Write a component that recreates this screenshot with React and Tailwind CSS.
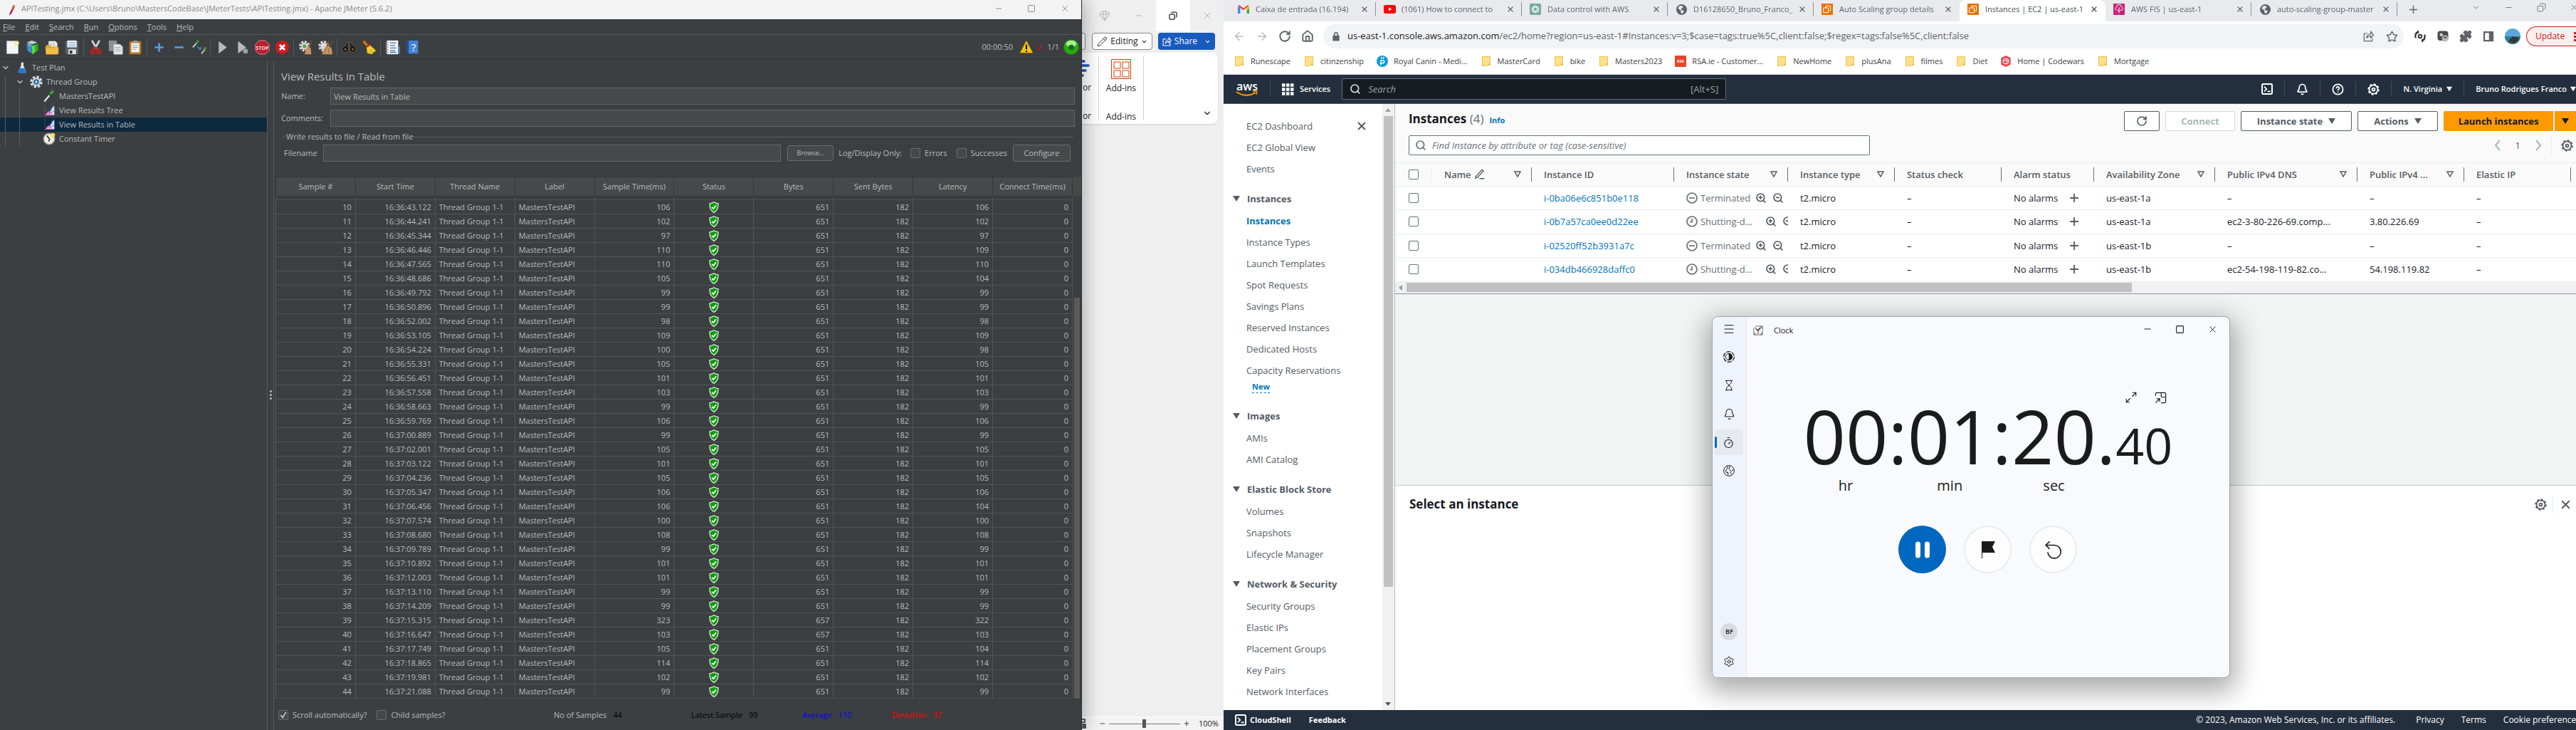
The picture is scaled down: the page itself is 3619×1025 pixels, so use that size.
import React from "react";
import {
  ArrowLeft, ArrowRight, RotateCw, Home, Star, Bell, X, Minus, Plus, Search, ZoomIn, ZoomOut,
  Square, Copy, ChevronDown, Gem, Puzzle, Menu, Hourglass, Timer, Maximize2, Settings,
  CircleHelp, Pencil,
} from "lucide-react";

const cx = (...a) => a.filter(Boolean).join(" ");

function Svg({ w = 22, h = 22, box = "0 0 24 24", className, children }) {
  return (
    <svg width={w} height={h} viewBox={box} fill="none" className={cx("shrink-0", className)} aria-hidden="true">
      {children}
    </svg>
  );
}

/* ---------------------------------------------------------------- JMeter */

const SAMPLES = [
  [10, "16:36:43.122", 106, 651, 106], [11, "16:36:44.241", 102, 651, 102], [12, "16:36:45.344", 97, 651, 97],
  [13, "16:36:46.446", 110, 651, 109], [14, "16:36:47.565", 110, 651, 110], [15, "16:36:48.686", 105, 651, 104],
  [16, "16:36:49.792", 99, 651, 99], [17, "16:36:50.896", 99, 651, 99], [18, "16:36:52.002", 98, 651, 98],
  [19, "16:36:53.105", 109, 651, 109], [20, "16:36:54.224", 100, 651, 98], [21, "16:36:55.331", 105, 651, 105],
  [22, "16:36:56.451", 101, 651, 101], [23, "16:36:57.558", 103, 651, 103], [24, "16:36:58.663", 99, 651, 99],
  [25, "16:36:59.769", 106, 651, 106], [26, "16:37:00.889", 99, 651, 99], [27, "16:37:02.001", 105, 651, 105],
  [28, "16:37:03.122", 101, 651, 101], [29, "16:37:04.236", 105, 651, 105], [30, "16:37:05.347", 106, 651, 106],
  [31, "16:37:06.456", 106, 651, 104], [32, "16:37:07.574", 100, 651, 100], [33, "16:37:08.680", 108, 651, 108],
  [34, "16:37:09.789", 99, 651, 99], [35, "16:37:10.892", 101, 651, 101], [36, "16:37:12.003", 101, 651, 101],
  [37, "16:37:13.110", 99, 651, 99], [38, "16:37:14.209", 99, 651, 99], [39, "16:37:15.315", 323, 657, 322],
  [40, "16:37:16.647", 103, 657, 103], [41, "16:37:17.749", 105, 651, 104], [42, "16:37:18.865", 114, 651, 114],
  [43, "16:37:19.981", 102, 651, 102], [44, "16:37:21.088", 99, 651, 99],
];

const TOOLBAR = [
  [
    ["New", <><path d="M3 2h14l4 4v16H3z" fill="#f4f4f4" stroke="#c9c9c9" /><circle cx="19" cy="5" r="3.5" fill="#f7e27a" /><circle cx="19" cy="5" r="1.6" fill="#fffbe0" /></>],
    ["Templates", <><path d="M3 4l8-3 9 3-8 3z" fill="#bcd3dc" /><path d="M3 5l8 4v13l-7-5z" fill="#3f8fd0" /><path d="M11 10l10-4v11l-9 6z" fill="#22b41f" /><path d="M11 10l5-2v12l-4 3z" fill="#60d94a" /><path d="M5 3l5 3 1 5-6-3z" fill="#8aa9b5" /></>],
    ["Open", <><path d="M6 2h11l3 3v9H6z" fill="#e9e9e9" /><path d="M8 6h8M8 9h9" stroke="#aaa" /><path d="M1 10l3-2h4l2 3h12v10l-2 2H2z" fill="#e2a52b" /><path d="M1 13h21l-1 10H2z" fill="#f2bd48" /></>],
    ["Save", <><path d="M1 2h21v20l-1 1H3l-2-2z" fill="#5d6165" /><path d="M4 1h15v11H4z" fill="#eef2f6" /><path d="M6 4h11M6 7h11M6 10h11" stroke="#6da0cf" /><path d="M6 15h12v8H6z" fill="#dfe0e1" /><path d="M8 17h4v5H8z" fill="#333" /></>],
  ],
  [
    ["Cut", <><path d="M6 1l8 14M18 1L10 15" stroke="#d9dde0" strokeWidth="3" /><circle cx="7" cy="19" r="3" stroke="#c61d1d" strokeWidth="2.6" /><circle cx="17" cy="19" r="3" stroke="#c61d1d" strokeWidth="2.6" /><path d="M9 16l3-4 3 4" stroke="#c61d1d" strokeWidth="2.4" /></>],
    ["Copy", <><path d="M1 1h13v17H1z" fill="#8d8f90" /><path d="M9 7h10l4 4v12H9z" fill="#e8e8e8" stroke="#bdbdbd" /><path d="M11 12h9M11 15h9M11 18h9" stroke="#999" /></>],
    ["Paste", <><rect x="2" y="2" width="19" height="21" rx="2" fill="#b5771d" /><path d="M5 5h13v15H5z" fill="#f3f3f3" /><rect x="8" y="1" width="7" height="4" rx="1" fill="#999" /><path d="M7 9h9M7 12h9M7 15h6" stroke="#8d8d8d" /></>],
  ],
  [
    ["Expand", <path d="M12 5v14M5 12h14" stroke="#5a9be0" strokeWidth="3" />],
    ["Collapse", <path d="M5 12h14" stroke="#5a9be0" strokeWidth="3" />],
    ["Toggle", <><path d="M2 12L10 3" stroke="#e4e4e4" strokeWidth="2" /><path d="M7 6l4-5" stroke="#3f9c33" strokeWidth="3" /><path d="M8 10l7 5m0-4v4h-4" stroke="#4e7fc4" strokeWidth="1.6" /><path d="M16 22l6-7" stroke="#d4d4d4" strokeWidth="2" /><path d="M20 16l3-4" stroke="#4f9647" strokeWidth="3" /></>],
  ],
  [
    ["Start", <path d="M6 2l13 10L6 22z" fill="#b7b9ba" />],
    ["Start no pauses", <><path d="M5 2l13 10L5 22z" fill="#b7b9ba" /><circle cx="17" cy="18" r="4" fill="#9fa1a2" /></>],
    ["Stop", <><path d="M7 1h10l6 6v10l-6 6H7l-6-6V7z" fill="#b8222f" stroke="#d98a90" /><text x="12" y="15.5" textAnchor="middle" fontSize="8" fontWeight="700" fill="#f6dada" fontFamily="Open Sans">STOP</text></>],
    ["Shutdown", <><circle cx="12" cy="12" r="11" fill="#cf1a1f" /><path d="M8 8l8 8M16 8l-8 8" stroke="#fff" strokeWidth="3.4" /></>],
  ],
  [
    ["Clear", <><circle cx="10" cy="10" r="7" stroke="#dcdcdc" strokeWidth="3.4" strokeDasharray="3.4 2" /><circle cx="10" cy="10" r="5.5" fill="#d8d8d8" /><circle cx="10" cy="10" r="3" fill="#53a83c" /><path d="M22 1l-5 11" stroke="#7d4a22" strokeWidth="2" /><path d="M14 11l6 2 1 10H10z" fill="#c89462" /></>],
    ["Clear All", <><circle cx="9" cy="10" r="7" stroke="#dcdcdc" strokeWidth="3.4" strokeDasharray="3.4 2" /><circle cx="9" cy="10" r="5.5" fill="#d8d8d8" /><path d="M17 1l-3 11M23 1l-4 11" stroke="#7d4a22" strokeWidth="2" /><path d="M11 11l10 1 2 11H6z" fill="#c89462" /><path d="M13 13l-3 9M17 13v9" stroke="#8d5f36" /></>],
  ],
  [
    ["Search", <><circle cx="6" cy="15" r="5" fill="#15130f" stroke="#75665a" /><circle cx="18" cy="15" r="5" fill="#15130f" stroke="#75665a" /><path d="M5 10l3-6h3v8M19 10l-3-6h-3v8" fill="#2b2622" stroke="#6b5a4d" /><circle cx="6" cy="15" r="2" fill="#8a5a33" /><circle cx="18" cy="15" r="2" fill="#8a5a33" /></>],
    ["Reset Search", <><path d="M3 2l8 9" stroke="#c07a16" strokeWidth="4" /><path d="M8 12l5-4 10 9-7 6-7-2z" fill="#f2cf2b" /><path d="M8 11l6-4" stroke="#c2261f" strokeWidth="3" /><path d="M12 20l4-5M15 22l4-5" stroke="#b78d11" /></>],
  ],
  [
    ["Function Helper", <><path d="M3 1h18v22H3z" fill="#fbfbfb" /><path d="M1 4h5M1 8h5M1 12h5M1 16h5M1 20h5" stroke="#aaa" strokeWidth="1.6" /><path d="M8 5h10M8 9h8M8 13h10M8 17h8M8 20h10" stroke="#3b6ab5" strokeWidth="1.6" /><path d="M22 10h2v12h-2z" fill="#3b8ad9" /></>],
    ["Help", <><path d="M3 1h18v21H5l-2-2z" fill="#4385d6" /><path d="M3 1h3v21l-3-2z" fill="#1f4f93" /><text x="14" y="18" textAnchor="middle" fontSize="17" fill="#fff" fontFamily="Open Sans">?</text></>],
  ],
];

function Check({ label, checked }) {
  return (
    <label className="flex items-center gap-[6px]">
      <span className="grid place-items-center">
        <input type="checkbox" defaultChecked={checked} className="col-start-1 row-start-1 size-[14px] appearance-none rounded-[2px] border border-[#6b6b6b] bg-[#43494a]" />
        {checked && (
          <Svg w={10} h={10} className="pointer-events-none col-start-1 row-start-1">
            <path d="M3 12l7 9L21 2" stroke="#c8c8c8" strokeWidth="4" />
          </Svg>
        )}
      </span>
      <span>{label}</span>
    </label>
  );
}

const Shield = () => (
  <Svg w={14} h={16} box="0 0 14 16" className="mx-auto">
    <path d="M7 .8c2 1.3 3.8 1.9 6 2.1C13.200 9 11.500 13 7 15.300 2.500 13 .8 9 1 2.900 3.200 2.700 5 2.100 7 .8z" fill="#0a9b0a" stroke="#e3e6e3" strokeWidth="1.3" />
    <path d="M4.2 7.800l2.100 2.300L10 5.300" stroke="#fff" strokeWidth="1.8" />
  </Svg>
);

const ChartIcon = () => (
  <Svg w={16} h={16}>
    <path d="M3 1v22" stroke="#8b8b8b" strokeDasharray="2 2" />
    <path d="M4 22l6-8 5 4 7-5v9z" fill="#e795d8" /><path d="M12 17l8-13 3-1v19z" fill="#d5e4fa" /><path d="M12 17l8-13 3-1" stroke="#5c80cf" strokeWidth="2" />
    <path d="M4 22l6-8 5 4 7-5" stroke="#c23fae" strokeWidth="1.5" />
  </Svg>
);

const TREE = [
  { d: 0, t: "Test Plan", icon: <Svg w={16} h={18}><path d="M10 1h5v7l6 13q0 2-2 2H6q-2 0-2-2l6-13z" fill="#dfe9f2" /><path d="M8 13h9l4 8q0 2-2 2H6q-2 0-2-2z" fill="#1f77d8" /></Svg> },
  { d: 1, t: "Thread Group", icon: <Svg w={18} h={18}><circle cx="12" cy="12" r="9.5" stroke="#d9dcde" strokeWidth="4" strokeDasharray="4.5 3" /><circle cx="12" cy="12" r="8" fill="#cfd5d9" /><circle cx="12" cy="12" r="5" fill="#2d66ad" /><path d="M10.5 9l4 3-4 3z" fill="#fff" /></Svg> },
  { d: 2, t: "MastersTestAPI", icon: <Svg w={18} h={18}><path d="M3 22L14 9" stroke="#dde2dd" strokeWidth="3" /><path d="M12 10l8-8" stroke="#3f9c33" strokeWidth="5" /><path d="M11 7l6 6" stroke="#2a2a2a" strokeWidth="2" /></Svg> },
  { d: 2, t: "View Results Tree", icon: <ChartIcon /> },
  { d: 2, t: "View Results in Table", icon: <ChartIcon />, on: true },
  { d: 2, t: "Constant Timer", icon: <Svg w={18} h={18}><circle cx="12" cy="12" r="10.5" fill="#f2eede" stroke="#8d8d9a" strokeWidth="2" /><path d="M8 6l5 7-2 4" stroke="#222" strokeWidth="2" /><circle cx="19" cy="5" r="4" fill="#f4df56" /></Svg> },
];

const field = "h-6 min-w-0 border border-[#646464] bg-[#45494a] px-1 text-[11px] text-[#bbbbbb] outline-none";
const jbtn = "flex items-center justify-center rounded-[3px] border border-[#6a6d6f] bg-[#45494a]";

function JMeter() {
  return (
    <section className="relative z-10 flex w-[42%] shrink-0 flex-col border-r border-[#2b2b2b] bg-[#3c3f41] text-[11px] leading-4 text-[#bbbbbb] shadow-[4px_0_24px_rgba(0,0,0,0.28)]">
      <header className="flex h-[27px] items-center bg-[#f3f3f3] pl-2 text-[#8a8a8a]">
        <Svg w={16} h={18}><path d="M16 1q4 1 2 7l-6 12-3 1z" fill="#c7242c" /><path d="M17 1q3 0 2 4l-4 6z" fill="#ef7d21" /><path d="M12 13l-4 10" stroke="#6e2177" strokeWidth="2" /></Svg>
        <h1 className="flex-1 pl-[6px] pb-[3px]">APITesting.jmx (C:\Users\Bruno\MastersCodeBase\JMeterTests\APITesting.jmx) - Apache JMeter (5.6.2)</h1>
        <div className="flex gap-[34px] pr-4 pb-1">
          <button aria-label="Minimize"><Minus size={12} strokeWidth={2} /></button>
          <button aria-label="Maximize"><Square size={12} strokeWidth={2} /></button>
          <button aria-label="Close"><X size={14} strokeWidth={1.5} /></button>
        </div>
      </header>
      <nav className="flex h-[22px] items-center gap-[14px] border-b border-[#515658] pl-1">
        {["File", "Edit", "Search", "Run", "Options", "Tools", "Help"].map((m) => (
          <button key={m}><u>{m[0]}</u>{m.slice(1)}</button>
        ))}
      </nav>
      <div className="flex h-[35px] items-center border-b border-[#323232] pl-[3px]">
        {TOOLBAR.map((g, i) => (
          <React.Fragment key={i}>
            {i > 0 && <span className="mx-[2px] h-6 w-px bg-[#55585a]" />}
            {g.map(([name, art]) => (
              <button key={name} aria-label={name} className="flex w-7 justify-center"><Svg w={21} h={21}>{art}</Svg></button>
            ))}
          </React.Fragment>
        ))}
        <div className="ml-auto flex items-center pr-[3px]">
          <span>00:00:50</span>
          <Svg w={22} h={20} className="ml-2"><path d="M12 1l11 21H1z" fill="#f2c511" stroke="#8d6f00" /><path d="M12 8v8M12 18v2.5" stroke="#111" strokeWidth="2.5" /></Svg>
          <span className="ml-1 text-[#ff0000]">2</span>
          <span className="ml-2">1/1</span>
          <Svg w={22} h={22} className="ml-[6px]"><circle cx="12" cy="12" r="11.5" fill="#26a80e" /><ellipse cx="12" cy="7" rx="8" ry="5" fill="#a9ec9a" /><circle cx="12" cy="12.5" r="4" fill="#166d12" /></Svg>
        </div>
      </div>

      <div className="flex flex-1">
        <aside className="w-[376px] shrink-0 border-r border-[#55585a] pt-px">
          <ul>
            {TREE.map((n) => (
              <li key={n.t} className={cx("flex h-5 items-center", n.on && "bg-[#0d293e]")}>
                {n.d > 0 && <span className="ml-[7px] h-5 w-px bg-[#5a5d5f]" />}
                {n.d > 1 && <span className="ml-[19px] h-5 w-px bg-[#5a5d5f]" />}
                {n.d === 2 && <span className="w-[32px]" />}
                {n.d < 2 && <ChevronDown size={12} strokeWidth={3} className={n.d ? "mr-2 ml-[14px]" : "mr-2 ml-[2px]"} />}
                <span className="flex w-[18px] justify-center">{n.icon}</span>
                <span className="pl-[5px]">{n.t}</span>
              </li>
            ))}
          </ul>
        </aside>
        <div className="flex w-[9px] shrink-0 flex-col items-center border-r border-[#55585a] pt-[464px]">
          {[0, 1, 2].map((i) => <span key={i} className="mb-[2px] size-[3px] rounded-full bg-[#bdbdbd]" />)}
        </div>
        <main className="flex min-w-0 flex-1 flex-col">
          <h2 className="pl-[10px] pt-3 text-[15px] leading-[22px]">View Results in Table</h2>
          <div className="flex items-center pl-[10px] pr-[9px] pt-[5px]">
            <label htmlFor="jm-name" className="w-[69px]">Name:</label>
            <input id="jm-name" defaultValue="View Results in Table" className={cx(field, "flex-1")} />
          </div>
          <div className="flex items-center pl-[10px] pr-[9px] pt-[7px]">
            <label htmlFor="jm-com" className="w-[69px]">Comments:</label>
            <input id="jm-com" className={cx(field, "flex-1")} />
          </div>
          <div className="flex items-center pl-3 pr-[11px] pt-[6px]">
            <span className="h-px w-1 bg-[#5a5d5f]" />
            <span className="px-px">Write results to file / Read from file</span>
            <span className="h-px flex-1 bg-[#5a5d5f]" />
          </div>
          <div className="flex items-center pl-[14px] pr-[15px] pt-[3px]">
            <label htmlFor="jm-file" className="w-[55px]">Filename</label>
            <input id="jm-file" className={cx(field, "flex-1")} />
            <button className={cx(jbtn, "ml-[9px] h-[22px] w-[65px] text-[9px]")}>Browse...</button>
            <span className="ml-[7px] mr-3">Log/Display Only:</span>
            <Check label="Errors" />
            <span className="w-[13px]" />
            <Check label="Successes" />
            <button className={cx(jbtn, "ml-2 h-6 w-[81px]")}>Configure</button>
          </div>
          <div className="mt-[21px] flex border-b border-[#343637] pl-[2px]">
            <table className="w-full flex-1 table-fixed border-collapse">
              <thead>
                <tr className="h-[27px] bg-[#45494a]">
                  {["Sample #", "Start Time", "Thread Name", "Label", "Sample Time(ms)", "Status", "Bytes", "Sent Bytes", "Latency", "Connect Time(ms)"].map((h) => (
                    <th key={h} className="border border-[#35383a] p-0 font-normal whitespace-nowrap">{h}</th>
                  ))}
                </tr>
              </thead>
              <tbody>
                <tr className="h-[5px]" aria-hidden="true">
                  {Array.from({ length: 10 }, (_, i) => <td key={i} className="border border-[#505456] border-t-[#35383a] p-0" />)}
                </tr>
                {SAMPLES.map(([n, t, ms, b, lat]) => (
                  <tr key={n} className="h-5 leading-[19px] text-right [&>td]:border [&>td]:border-[#505456] [&>td]:px-[5px] [&>td]:py-0">
                    <td>{n}</td><td>{t}</td><td className="text-left">Thread Group 1-1</td><td className="text-left">MastersTestAPI</td>
                    <td>{ms}</td><td><Shield /></td><td>{b}</td><td>182</td><td>{lat}</td><td>0</td>
                  </tr>
                ))}
              </tbody>
            </table>
            <div className="flex w-3 flex-col">
              <span className="h-[27px] bg-[#45494a]" />
              <span className="mr-[2px] ml-[2px] mt-[143px] flex-1 bg-[#595b5d]" />
            </div>
          </div>
          <div className="flex h-[43px] items-center pl-[6px]">
            <div className="flex w-[387px] gap-[14px]">
              <Check label="Scroll automatically?" checked />
              <Check label="Child samples?" />
            </div>
            <div className="flex w-[193px] gap-[9px]"><span>No of Samples</span><span className="text-black">44</span></div>
            <div className="flex w-[156px] gap-[9px] text-black"><span>Latest Sample</span><span>99</span></div>
            <div className="flex w-[126px] gap-[9px] text-[#0000ff]"><span>Average</span><span>110</span></div>
            <div className="flex gap-[9px] text-[#ff0000]"><span>Deviation</span><span>37</span></div>
          </div>
        </main>
      </div>
    </section>
  );
}

/* ------------------------------------------------------------------ Word */

function Word() {
  return (
    <section className="flex w-[199px] shrink-0 flex-col bg-[#efefef] text-[#222]">
      <div className="flex h-11 items-center text-[#b5b5b5]">
        <Gem size={16} strokeWidth={1.5} className="ml-[24px]" />
        <button aria-label="Minimize" className="ml-[34px]"><Minus size={12} strokeWidth={2} /></button>
        <button aria-label="Restore" className="ml-[18px] grid h-11 w-12 place-items-center bg-white text-[#222]"><Copy size={12} strokeWidth={2.5} className="-scale-x-100" /></button>
        <button aria-label="Close" className="ml-[16px]"><X size={16} strokeWidth={1.5} /></button>
      </div>
      <div className="flex h-7 items-center text-[12px]">
        <span className="h-6 w-[5px] rounded-r border border-l-0 border-[#8a8a8a] bg-white" />
        <button className="ml-[9px] flex h-6 w-[85px] items-center justify-center gap-1 rounded border border-[#8a8a8a] bg-white">
          <Pencil size={15} strokeWidth={1.5} />Editing<ChevronDown size={9} strokeWidth={3} />
        </button>
        <button className="ml-2 flex h-6 w-[80px] items-center justify-center gap-1 rounded bg-[#185abd] text-white">
          <Svg w={13} h={13}><path d="M10 5H2v17h18v-8M8 17c0-7 5-10 9-10V2l6 7-6 6v-4c-4 0-7 2-9 6z" stroke="#fff" strokeWidth="2" /></Svg>
          Share<ChevronDown size={9} strokeWidth={3} className="ml-[6px]" />
        </button>
      </div>
      <div className="mr-2 mt-[2px] flex h-[100px] rounded-r-lg bg-white pt-[5px] text-[12px] leading-5 shadow">
        <div className="flex h-[90px] w-6 flex-col border-r border-[#d0d0d0]">
          <Svg w={12} h={28} box="0 0 12 28" className="mt-1"><path d="M0 3h3M0 9h9M0 16h5M0 23h1" stroke="#185abd" strokeWidth="3.5" strokeLinecap="round" /></Svg>
          <span className="mt-[2px] pl-[1px]">or</span>
          <span className="mt-5 pl-[1px]">or</span>
        </div>
        <div className="flex h-[90px] w-[63px] flex-col items-center border-r border-[#d0d0d0]">
          <Svg w={28} h={28} box="0 0 28 28" className="mt-1"><path d="M.5.5h27v27H.5zM4 4h9v9H4zM16 4h9v9h-9zM4 16h9v9H4zM16 16h9v9h-9z" stroke="#d83b01" /></Svg>
          <span className="mt-[3px]">Add-ins</span>
          <span className="mt-5">Add-ins</span>
        </div>
        <button aria-label="Collapse ribbon" className="ml-auto mr-2 mb-2 self-end"><ChevronDown size={14} strokeWidth={2} /></button>
      </div>
      <footer className="mt-auto flex h-[19px] items-center border-t border-white bg-[#f3f3f3] text-[11px] leading-4">
        <Svg w={6} h={14} box="0 0 6 14"><path d="M0 1h4v4H0M0 8h5v5H0M0 10.500h5M2.500 8v5" stroke="#333" strokeWidth="1.5" /></Svg>
        <button aria-label="Zoom out" className="ml-[18px]"><Minus size={10} /></button>
        <input type="range" aria-label="Zoom" defaultValue="50" className="ml-1 h-3 w-[100px] appearance-none bg-[linear-gradient(#777,#777)] bg-[length:100%_1px] bg-center bg-no-repeat [&::-webkit-slider-thumb]:h-3 [&::-webkit-slider-thumb]:w-[5px] [&::-webkit-slider-thumb]:appearance-none [&::-webkit-slider-thumb]:bg-[#555]" />
        <button aria-label="Zoom in" className="ml-1"><Plus size={10} /></button>
        <span className="ml-3">100%</span>
      </footer>
    </section>
  );
}

/* ---------------------------------------------------------------- Chrome */

const Gmail = () => <Svg w={16} h={14} box="0 0 24 18"><path d="M0 18V2l5 4v12z" fill="#4285f4" /><path d="M19 18V6l5-4v16z" fill="#34a853" /><path d="M5 6L1 2l2-2 9 7 9-7 2 2-11 9z" fill="#ea4335" /><path d="M19 6l4-5 1 2v5l-5 3z" fill="#fbbc04" /></Svg>;
const YouTube = () => <Svg w={17} h={12} box="0 0 24 17"><rect width="24" height="17" rx="4" fill="#f00" /><path d="M10 5l6 3.5-6 3.5z" fill="#fff" /></Svg>;
const Gpt = () => <Svg w={16} h={16}><rect width="24" height="24" rx="3" fill="#74aa9c" /><g stroke="#fff" strokeWidth="1.3"><ellipse cx="12" cy="12" rx="4" ry="8" /><ellipse cx="12" cy="12" rx="4" ry="8" transform="rotate(60 12 12)" /><ellipse cx="12" cy="12" rx="4" ry="8" transform="rotate(120 12 12)" /></g></Svg>;
const GlobeDark = () => <Svg w={15} h={15}><circle cx="12" cy="12" r="12" fill="#5f6368" /><path d="M9 3l5 1 1 4-4 2 0 3 5 1 1 3-4 4-3-3 0-4-6-5 2-4z" fill="#e8eaed" /></Svg>;
const Ec2 = () => <Svg w={16} h={16}><rect width="24" height="24" fill="#ed7100" /><path d="M4 9h10v10H4zM9 9V5h10v10h-5" stroke="#fff" strokeWidth="1.5" /></Svg>;
const Fis = () => <Svg w={16} h={16}><rect width="24" height="24" fill="#c7267a" /><path d="M6 14a4 4 0 011-7 5 5 0 0110 0 4 4 0 011 7h-4M12 8v12M12 16l-4-2" stroke="#fff" strokeWidth="1.5" /></Svg>;

const TABS = [
  [<Gmail />, "Caixa de entrada (16.194)"], [<YouTube />, "(1061) How to connect to"], [<Gpt />, "Data control with AWS"],
  [<GlobeDark />, "D16128650_Bruno_Franco_"], [<Ec2 />, "Auto Scaling group details"], [<Ec2 />, "Instances | EC2 | us-east-1", true],
  [<Fis />, "AWS FIS | us-east-1"], [<GlobeDark />, "auto-scaling-group-master"],
];

const Folder = () => <Svg w={16} h={14} box="0 0 16 14"><path d="M2.5.5h11v12H8.500v1h-6z" fill="#ffe08a" stroke="#e8c357" /><path d="M11 10h3v3h-3z" fill="#e8c357" /></Svg>;
const Royal = () => <Svg w={16} h={16}><circle cx="12" cy="12" r="12" fill="#0b9ad9" /><path d="M9 20V10h4a3 3 0 010 6H7M10 3l1 4M15 3l-1 4" stroke="#fff" strokeWidth="2.2" /></Svg>;
const Rsa = () => <Svg w={16} h={16}><rect width="24" height="24" rx="2" fill="#e5452b" /><text x="12" y="15" textAnchor="middle" fontSize="8" fontWeight="700" fill="#fff" fontFamily="Open Sans">RSA</text></Svg>;
const Codewars = () => <Svg w={16} h={16}><path d="M12 0l10 5v14l-10 5L2 19V5z" fill="#e8474f" /><circle cx="12" cy="12" r="6" stroke="#fff" strokeWidth="1.5" /><path d="M12 6q4 4 0 12M6 12q6-4 12 0" stroke="#fff" strokeWidth="1.5" /></Svg>;

const MARKS = [
  [<Folder />, "Runescape"], [<Folder />, "citinzenship"], [<Royal />, "Royal Canin - Medi..."], [<Folder />, "MasterCard"], [<Folder />, "bike"],
  [<Folder />, "Masters2023"], [<Rsa />, "RSA.ie - Customer..."], [<Folder />, "NewHome"], [<Folder />, "plusAna"], [<Folder />, "filmes"],
  [<Folder />, "Diet"], [<Codewars />, "Home | Codewars"], [<Folder />, "Mortgage"],
];

function BrowserBars() {
  return (
    <>
      <div className="flex h-[30px] bg-[#e8eaed] pl-[9px] text-[11px] text-[#5f6368]">
        {TABS.map(([icon, t, on], i) => (
          <div key={t} className={cx("flex h-[30px] w-[205px] shrink-0 items-center pb-1 pl-[11px]", on && "rounded-t-lg bg-white text-[#45494d]")}>
            <span className="flex w-[17px] shrink-0 justify-center">{icon}</span>
            <span className="ml-2 w-[144px] overflow-hidden whitespace-nowrap [mask-image:linear-gradient(90deg,#000_94%,transparent)]">{t}</span>
            <button aria-label={"Close " + t} className="ml-[3px]"><X size={12} strokeWidth={2.5} /></button>
            {!on && i !== 4 && <span className="ml-auto h-5 w-px bg-[#8d9196]" />}
          </div>
        ))}
        <button aria-label="New tab" className="ml-[14px] pb-1"><Plus size={17} strokeWidth={2} /></button>
        <div className="ml-auto flex items-center gap-[33px] overflow-hidden pb-[10px]">
          <ChevronDown size={13} strokeWidth={1.5} />
          <Minus size={13} strokeWidth={1.5} />
          <Copy size={13} strokeWidth={1.5} className="-scale-x-100" />
          <X size={13} strokeWidth={1.5} className="-mr-1" />
        </div>
      </div>
      <div className="flex h-[42px] items-center bg-white text-[13px] text-[#5f6368]">
        <div className="flex gap-[14px] pl-[13px]">
          <button aria-label="Back" className="text-[#b8babd]"><ArrowLeft size={18} /></button>
          <button aria-label="Forward" className="text-[#b8babd]"><ArrowRight size={18} /></button>
          <button aria-label="Reload"><RotateCw size={18} strokeWidth={2.5} /></button>
          <button aria-label="Home"><Home size={18} strokeWidth={2.5} /></button>
        </div>
        <div className="ml-[13px] flex h-[34px] flex-1 items-center rounded-full bg-[#f1f3f4] pl-[11px] pr-2">
          <Svg w={14} h={14}><path d="M4 10h16v13H4z" fill="#5f6368" /><path d="M8 11V7a4 4 0 018 0v4" stroke="#5f6368" strokeWidth="2.5" /></Svg>
          <span className="flex-1 pl-[9px]"><span className="text-[#202124]">us-east-1.console.aws.amazon.com</span>/ec2/home?region=us-east-1#Instances:v=3;$case=tags:true%5C,client:false;$regex=tags:false%5C,client:false</span>
          <button aria-label="Share" className="mr-4"><Svg w={16} h={16}><path d="M9 6H2v16h17v-6M7 16c1-6 4-9 9-9V2l6 7-6 6v-4c-4 0-6 1-9 5z" stroke="#5f6368" strokeWidth="1.8" /></Svg></button>
          <button aria-label="Bookmark"><Star size={17} /></button>
        </div>
        <div className="flex items-center gap-[14px] overflow-hidden pl-[14px]">
          <Svg w={18} h={18}><path d="M4 15a9 9 0 012-10l3-2M20 9a9 9 0 01-2 10l-3 2" stroke="#333" strokeWidth="3" /><path d="M8 1v5h-5M16 23v-5h5" stroke="#333" strokeWidth="2" /><circle cx="12" cy="12" r="3" stroke="#333" strokeWidth="2.5" /></Svg>
          <Svg w={18} h={18}><rect x="2" y="2" width="20" height="18" rx="5" fill="#4b4b4b" /><circle cx="9" cy="9" r="3" fill="#cfcfcf" /><circle cx="16" cy="16" r="6" fill="#b9b9b9" /><path d="M13 14h6" stroke="#444" strokeWidth="2" /></Svg>
          <Puzzle size={18} fill="currentColor" />
          <Svg w={18} h={18}><path d="M4 4h16v16H4z" stroke="#5f6368" strokeWidth="3" /><path d="M13 4h7v16h-7z" fill="#5f6368" /></Svg>
          <Svg w={22} h={22}><circle cx="12" cy="12" r="12" fill="#5ba7e0" /><path d="M0 12h24a12 12 0 01-24 0z" fill="#2f7f93" /><path d="M12 12l10 2a12 12 0 01-9 9l-8-3z" fill="#3a3734" /></Svg>
          <button className="-ml-[6px] flex h-7 w-[70px] shrink-0 items-center rounded-l-full border border-r-0 border-[#c5221f] bg-[#fceeee] pl-3 text-[12px] text-[#c5221f]">
            Update<span className="ml-auto flex flex-col gap-[2px]">{[0, 1, 2].map((i) => <span key={i} className="size-[3px] bg-[#c5221f]" />)}</span>
          </button>
        </div>
      </div>
      <div className="flex h-[33px] items-center gap-[18px] border-b border-[#dadce0] bg-white pb-1 pl-[14px] text-[11px] text-[#3c4043]">
        {MARKS.map(([icon, t]) => <a key={t} href="#" className="flex items-center gap-2 whitespace-nowrap">{icon}{t}</a>)}
      </div>
    </>
  );
}

/* ------------------------------------------------------------ AWS console */

const Cog = ({ size = 18 }) => (
  <Svg w={size} h={size}>
    <circle cx="12" cy="12" r="8.5" stroke="currentColor" strokeWidth="2.5" />
    <circle cx="12" cy="12" r="10.4" stroke="currentColor" strokeWidth="2.4" strokeDasharray="4.1 4.07" />
    <circle cx="12" cy="12" r="2.8" stroke="currentColor" strokeWidth="2.5" />
  </Svg>
);
const Shell = () => <Svg w={16} h={16}><rect x="1.5" y="1.5" width="21" height="21" rx="2.5" stroke="currentColor" strokeWidth="3" /><path d="M6 7l5 5-5 5M13 17h6" stroke="currentColor" strokeWidth="2.5" /></Svg>;
const Down = ({ s = 10 }) => <Svg w={s} h={s} box="0 0 10 10"><path d="M0 1h10L5 9z" fill="currentColor" /></Svg>;
const Rule = () => <span className="h-[22px] w-px bg-[#414d5c]" />;

const NAV = [
  ["", ["EC2 Dashboard", "EC2 Global View", "Events"]],
  ["Instances", ["Instances", "Instance Types", "Launch Templates", "Spot Requests", "Savings Plans", "Reserved Instances", "Dedicated Hosts", "Capacity Reservations"]],
  ["Images", ["AMIs", "AMI Catalog"]],
  ["Elastic Block Store", ["Volumes", "Snapshots", "Lifecycle Manager"]],
  ["Network & Security", ["Security Groups", "Elastic IPs", "Placement Groups", "Key Pairs", "Network Interfaces"]],
];

const COLS = [
  ["Name", "w-[140px]", true], ["Instance ID", "w-[200px]"], ["Instance state", "w-[160px]", true], ["Instance type", "w-[150px]", true],
  ["Status check", "w-[150px]"], ["Alarm status", "w-[130px]"], ["Availability Zone", "w-[170px]", true], ["Public IPv4 DNS", "w-[200px]", true],
  ["Public IPv4 ...", "w-[150px]", true], ["Elastic IP", "w-[150px]"],
];

const INSTANCES = [
  ["i-0ba06e6c851b0e118", false, "us-east-1a", "–", "–"],
  ["i-0b7a57ca0ee0d22ee", true, "us-east-1a", "ec2-3-80-226-69.comp...", "3.80.226.69"],
  ["i-02520ff52b3931a7c", false, "us-east-1b", "–", "–"],
  ["i-034db466928daffc0", true, "us-east-1b", "ec2-54-198-119-82.co...", "54.198.119.82"],
];

function StateCell({ busy }) {
  return (
    <div className="flex items-center overflow-hidden whitespace-nowrap text-[#687078]">
      <Svg w={16} h={16}><circle cx="12" cy="12" r="10.5" stroke="currentColor" strokeWidth="2.5" /><path d={busy ? "M12 6v7H8" : "M6 12h12"} stroke="currentColor" strokeWidth="2.5" /></Svg>
      <span className={cx("ml-1 shrink-0", busy ? "w-[84px]" : "w-[70px]")}>{busy ? "Shutting-d..." : "Terminated"}</span>
      <ZoomIn size={16} strokeWidth={2.5} className="ml-[7px] shrink-0 text-[#545b64]" />
      <ZoomOut size={16} strokeWidth={2.5} className="ml-2 shrink-0 text-[#545b64]" />
    </div>
  );
}

const tick = "block size-[14px] appearance-none rounded-[2px] border border-[#687078] bg-white";
const abtn = "flex h-7 items-center justify-center gap-2 rounded-[2px] border bg-white";

function Console() {
  return (
    <div className="flex flex-1 flex-col text-[13px] leading-[18px] text-[#16191f]">
      <header className="flex h-10 items-center bg-[#232f3e] text-[11px] font-semibold text-white">
        <a href="#" aria-label="AWS" className="ml-[17px] flex w-8 flex-col items-center">
          <span className="text-[16px] leading-[12px] font-semibold">aws</span>
          <Svg w={32} h={9} box="0 0 32 9"><path d="M1 2q14 9 27 1" stroke="#ff9900" strokeWidth="2" /><path d="M24 1.500l6-.5-1 5" stroke="#ff9900" strokeWidth="1.5" /></Svg>
        </a>
        <span className="ml-4 h-[22px] w-px bg-[#414d5c]" />
        <button className="ml-4 flex items-center gap-2">
          <Svg w={17} h={17} box="0 0 17 17"><path d="M0 2.500h4.500M6 2.500h4.500M12 2.500h4.500M0 8.500h4.500M6 8.500h4.500M12 8.500h4.500M0 14.500h4.500M6 14.500h4.500M12 14.500h4.500" stroke="#fff" strokeWidth="4.5" /></Svg>
          Services
        </button>
        <label className="ml-4 flex h-[30px] w-[540px] items-center rounded-[2px] border border-[#687078] bg-[#161b22] px-[10px] text-[13px] font-normal text-[#95a5a6]">
          <Search size={16} strokeWidth={2.5} className="text-[#d5dbdb]" />
          <input aria-label="Search" placeholder="Search" className="ml-[10px] flex-1 bg-transparent italic outline-none placeholder:text-[#95a5a6]" />
          [Alt+S]
        </label>
        <div className="ml-auto flex items-center gap-4 whitespace-nowrap">
          <button aria-label="CloudShell"><Shell /></button><Rule />
          <button aria-label="Notifications"><Bell size={17} strokeWidth={2.5} /></button><Rule />
          <button aria-label="Help"><CircleHelp size={17} strokeWidth={2.5} /></button><Rule />
          <button aria-label="Settings"><Cog size={17} /></button><Rule />
          <button className="flex items-center gap-[6px]">N. Virginia <Down s={8} /></button><Rule />
          <button className="flex items-center gap-[5px]">Bruno Rodrigues Franco <Down s={8} /></button>
        </div>
      </header>

      <div className="flex flex-1 border-t border-[#545b64]">
        <aside className="w-[223px] shrink-0 bg-white pt-4">
          {NAV.map(([head, items], i) => (
            <div key={i} className={i ? "mt-[11px]" : ""}>
              {head && <button className="flex h-8 items-center gap-[10px] pl-[13px] font-bold text-[#545b64]"><Down />{head}</button>}
              {items.map((t) => (
                <div key={t} className="flex h-[30px] items-center justify-between pl-8 pr-5">
                  <a href="#" className={t === "Instances" ? "font-bold text-[#0073bb]" : "text-[#545b64]"}>{t}</a>
                  {t === "EC2 Dashboard" && <button aria-label="Close navigation" className="text-[#545b64]"><X size={18} strokeWidth={2.5} /></button>}
                </div>
              ))}
              {head === "Instances" && (
                <div className="h-[22px] pl-10 text-[11px] leading-4 font-bold text-[#0073bb]"><span className="inline-block border-b border-dashed border-[#0073bb]">New</span></div>
              )}
            </div>
          ))}
        </aside>
        <div className="flex w-[17px] shrink-0 flex-col items-center justify-between bg-[#f1f1f1]">
          <span className="flex h-[17px] items-center"><Svg w={8} h={5} box="0 0 8 5"><path d="M0 5l4-5 4 5z" fill="#9a9a9a" /></Svg></span>
          <span className="w-[13px] flex-1 bg-[#c1c1c1]" />
          <span className="flex h-[173px] items-end pb-[6px]"><Svg w={8} h={5} box="0 0 8 5"><path d="M0 0l4 5 4-5z" fill="#505050" /></Svg></span>
        </div>
        <main className="flex min-w-0 flex-1 flex-col border-l border-[#b5bdbd] bg-[#f2f3f3]">
          <div className="bg-[#fafafa] pt-[10px]">
            <div className="flex items-center justify-between pl-[19px]">
              <h2 className="pb-1 text-[17px] font-bold">Instances <span className="font-normal text-[#687078]">(4)</span><a href="#" className="ml-2 text-[11px] font-bold text-[#0073bb]">Info</a></h2>
              <div className="flex gap-2 font-bold text-[#545b64]">
                <button aria-label="Refresh" className={cx(abtn, "w-[50px] border-[#545b64]")}><RotateCw size={16} strokeWidth={2.5} /></button>
                <button disabled className={cx(abtn, "w-[98px] border-[#d5dbdb] text-[#aab7b8]")}>Connect</button>
                <button className={cx(abtn, "w-[156px] border-[#545b64]")}>Instance state <Down /></button>
                <button className={cx(abtn, "w-[113px] border-[#545b64]")}>Actions <Down /></button>
                <div className="flex gap-[2px] text-[#16191f]">
                  <button className="h-7 w-[154px] rounded-l-[2px] bg-[#ff9900]">Launch instances</button>
                  <button aria-label="More launch options" className="grid h-7 w-[30px] place-items-center bg-[#ff9900]"><Down /></button>
                </div>
              </div>
            </div>
            <div className="flex items-center justify-between pt-[6px] pl-[19px] pr-1">
              <label className="flex h-7 w-[648px] items-center rounded-[2px] border border-[#687078] bg-white px-2 text-[#687078]">
                <Search size={16} strokeWidth={2.5} />
                <input aria-label="Find Instance" placeholder="Find Instance by attribute or tag (case-sensitive)" className="ml-2 flex-1 italic outline-none placeholder:text-[#687078]" />
              </label>
              <div className="flex items-center text-[#545b64]">
                <button aria-label="Previous page"><Svg w={10} h={16} box="0 0 10 16"><path d="M8 1L2 8l6 7" stroke="#aab7b8" strokeWidth="2" /></Svg></button>
                <span className="px-[20px]">1</span>
                <button aria-label="Next page"><Svg w={10} h={16} box="0 0 10 16"><path d="M2 1l6 7-6 7" stroke="#aab7b8" strokeWidth="2" /></Svg></button>
                <span className="mx-[13px] h-7 w-px bg-[#eaeded]" />
                <button aria-label="Preferences"><Cog size={17} /></button>
              </div>
            </div>
            <div className="mt-[10px] border-t border-[#eaeded]">
              <table className="w-full table-fixed border-collapse">
                <thead>
                  <tr className="h-8 border-b border-[#eaeded] text-left text-[#545b64]">
                    <th className="w-[52px] p-0"><div className="flex h-5 items-center border-r border-[#eaeded] pl-[19px]"><input type="checkbox" aria-label="Select all" className={tick} /></div></th>
                    {COLS.map(([t, w, sort]) => (
                      <th key={t} className={cx(w, "p-0 font-semibold")}>
                        <div className="flex h-5 items-center border-r border-[#687078] pl-[17px] pr-[14px] whitespace-nowrap">
                          {t}{t === "Name" && <Svg w={15} h={15} className="ml-1"><path d="M4 17L18 2l3 3L8 19l-5 2zM12 22h11" stroke="currentColor" strokeWidth="2.2" /></Svg>}
                          {sort && <Svg w={10} h={9} box="0 0 10 9" className="ml-auto"><path d="M1 1h8L5 8z" stroke="currentColor" strokeWidth="1.5" /></Svg>}
                        </div>
                      </th>
                    ))}
                    <th className="p-0" />
                  </tr>
                </thead>
                <tbody className="bg-white">
                  {INSTANCES.map(([id, busy, az, dns, ip]) => (
                    <tr key={id} className="h-[33px] border-b border-[#eaeded] even:h-[34px] [&>td]:py-0 [&>td]:pr-0 [&>td]:pl-[17px]">
                      <td><input type="checkbox" aria-label={"Select " + id} className={cx(tick, "ml-[2px]")} /></td>
                      <td />
                      <td><a href="#" className="text-[#0073bb]">{id}</a></td>
                      <td><StateCell busy={busy} /></td>
                      <td>t2.micro</td>
                      <td>–</td>
                      <td><span className="flex items-center justify-between pr-[19px] whitespace-nowrap">No alarms <Plus size={18} strokeWidth={2.5} className="text-[#545b64]" /></span></td>
                      <td>{az}</td><td>{dns}</td><td>{ip}</td><td>–</td><td />
                    </tr>
                  ))}
                </tbody>
              </table>
            </div>
          </div>
          <div className="flex h-[17px] items-center border-b border-[#879596] bg-[#f1f1f1]">
            <span className="flex w-4 justify-center"><Svg w={5} h={8} box="0 0 5 8"><path d="M5 0L0 4l5 4z" fill="#9a9a9a" /></Svg></span>
            <span className="h-[13px] w-[1019px] bg-[#c1c1c1]" />
          </div>
          <div className="mt-auto flex h-[316px] items-start border-t border-[#c5cccc] bg-white pt-[14px] pl-5 pr-[5px]">
            <h2 className="flex-1 pt-[3px] text-[17px] font-bold">Select an instance</h2>
            <div className="flex items-center text-[#545b64]">
              <button aria-label="Panel preferences"><Cog size={17} /></button>
              <span className="mx-2 h-6 w-px bg-[#eaeded]" />
              <button aria-label="Close panel"><X size={19} strokeWidth={2.5} /></button>
            </div>
          </div>
        </main>
      </div>

      <footer className="flex h-7 items-center overflow-hidden bg-[#232f3e] pl-4 text-[12px] whitespace-nowrap text-white">
        <button className="flex items-center gap-[5px] text-[11px] font-bold"><Shell />CloudShell</button>
        <a href="#" className="ml-[25px] text-[11px] font-bold">Feedback</a>
        <span className="ml-auto">© 2023, Amazon Web Services, Inc. or its affiliates.</span>
        <a href="#" className="ml-[29px]">Privacy</a>
        <a href="#" className="ml-6">Terms</a>
        <a href="#" className="-mr-[6px] ml-6">Cookie preferences</a>
      </footer>
    </div>
  );
}

/* ----------------------------------------------------------------- Clock */

function Group({ value, unit }) {
  return <div className="flex flex-col items-center"><span className="leading-[90px]">{value}</span><span className="mt-[11px] text-xl">{unit}</span></div>;
}

function Clock() {
  const side = "grid h-9 w-10 place-items-center rounded";
  return (
    <section className="absolute top-[444px] left-[686px] flex h-[508px] w-[728px] overflow-hidden rounded-lg border border-[#a3a5a8] bg-[#f8fafe] text-[#1b1b1b] shadow-[0_12px_36px_8px_rgba(0,0,0,0.32)]">
      <nav className="flex w-12 flex-col items-center gap-1 border-r border-[#e2e6ec] bg-[#eff3fb]">
        <button aria-label="Menu" className="grid h-[34px] w-10 place-items-center"><Menu size={18} strokeWidth={1.5} /></button>
        <button aria-label="Focus sessions" className={side}><Svg w={16} h={16}><circle cx="12" cy="12" r="11" stroke="currentColor" strokeWidth="2" strokeDasharray="9 2.5" /><circle cx="12" cy="12" r="7" stroke="currentColor" strokeWidth="1.5" /><path d="M12 6a6 6 0 010 12q2-6 0-12z" fill="currentColor" stroke="currentColor" strokeWidth="2" /></Svg></button>
        <button aria-label="Timer" className={side}><Hourglass size={16} strokeWidth={1.5} /></button>
        <button aria-label="Alarm" className={side}><Bell size={17} strokeWidth={1.5} /></button>
        <button aria-label="Stopwatch" className="flex h-9 w-10 items-center rounded bg-[#e6e9ef]"><span className="h-4 w-[3px] rounded bg-[#0067c0]" /><Timer size={17} strokeWidth={1.5} className="ml-2" /></button>
        <button aria-label="World clock" className={side}><Svg w={16} h={16}><circle cx="12" cy="12" r="11" stroke="currentColor" strokeWidth="1.5" /><path d="M9 2v4l-4 6 2 4 3-1 0 6M14 2l-2 6 5 6-2 3 3 3M22 9l-4 3" stroke="currentColor" strokeWidth="1.5" /></Svg></button>
        <span className="mt-auto mb-2 grid size-6 place-items-center rounded-full bg-[#d8dbe2] text-[9px] font-semibold">BF</span>
        <button aria-label="Settings" className="mb-1 grid h-9 w-10 place-items-center"><Settings size={16} strokeWidth={1.5} /></button>
      </nav>
      <div className="flex flex-1 flex-col items-center">
        <header className="flex h-[38px] w-full items-center pl-2 text-[11px]">
          <Svg w={16} h={16}><path d="M2 22V8L8 2h14v20z" fill="#7c868f" /><circle cx="12" cy="12" r="9" fill="#eef1f4" /><path d="M7 8l5 4 5-6" stroke="#222" strokeWidth="2" /><path d="M12 12v8" stroke="#d65532" strokeWidth="2" /></Svg>
          <h1 className="flex-1 pl-[14px]">Clock</h1>
          <div className="flex gap-8 pr-4 pb-1">
            <button aria-label="Minimize"><Minus size={14} strokeWidth={2} /></button>
            <button aria-label="Maximize"><Square size={13} strokeWidth={2} /></button>
            <button aria-label="Close"><X size={15} strokeWidth={1.5} /></button>
          </div>
        </header>
        <div className="mt-[66px] flex flex-col">
          <div className="flex justify-end gap-6 pr-2">
            <button aria-label="Expand"><Maximize2 size={18} strokeWidth={1.5} /></button>
            <button aria-label="Keep on top">
              <Svg w={17} h={17}><path d="M2 8V5a3 3 0 013-3h14a3 3 0 013 3v14a3 3 0 01-3 3h-6M13 2v7a2 2 0 002 2h7M2 22l8-8M4 14h6v6" stroke="currentColor" strokeWidth="1.6" /></Svg>
            </button>
          </div>
          <div className="flex items-baseline text-[104px]">
            <Group value="00" unit="hr" /><span className="leading-[90px]">:</span>
            <Group value="01" unit="min" /><span className="leading-[90px]">:</span>
            <Group value="20" unit="sec" /><span className="leading-[90px]">.</span>
            <span className="text-[70px] leading-[90px]">40</span>
          </div>
        </div>
        <div className="mt-[42px] flex gap-[25px]">
          <button aria-label="Pause" className="grid size-[67px] place-items-center rounded-full bg-[#0067c0]"><Svg w={24} h={24}><path d="M5.500 4v16M18.500 4v16" stroke="#fff" strokeWidth="7" strokeLinecap="round" /></Svg></button>
          <button aria-label="Lap" className="grid size-[67px] place-items-center rounded-full border-2 border-[#ebecef] bg-[#fdfdfe]"><Svg w={24} h={26} box="0 0 24 26"><path d="M3 1h19l-4 8 4 8H4v8H3z" fill="#1b1b1b" /></Svg></button>
          <button aria-label="Reset" className="grid size-[67px] place-items-center rounded-full border-2 border-[#ebecef] bg-[#fdfdfe]"><Svg w={26} h={26}><path d="M7 1L2 6l5 5M2 6h11a8.500 8.500 0 11-8.500 9" stroke="#1b1b1b" strokeWidth="1.5" /></Svg></button>
        </div>
      </div>
    </section>
  );
}

export default function App() {
  return (
    <div className="flex min-h-screen w-full overflow-hidden bg-white font-['Open_Sans','Noto_Sans',sans-serif]">
      <JMeter />
      <Word />
      <section className="relative flex min-w-0 flex-1 flex-col">
        <BrowserBars />
        <Console />
        <Clock />
      </section>
    </div>
  );
}
